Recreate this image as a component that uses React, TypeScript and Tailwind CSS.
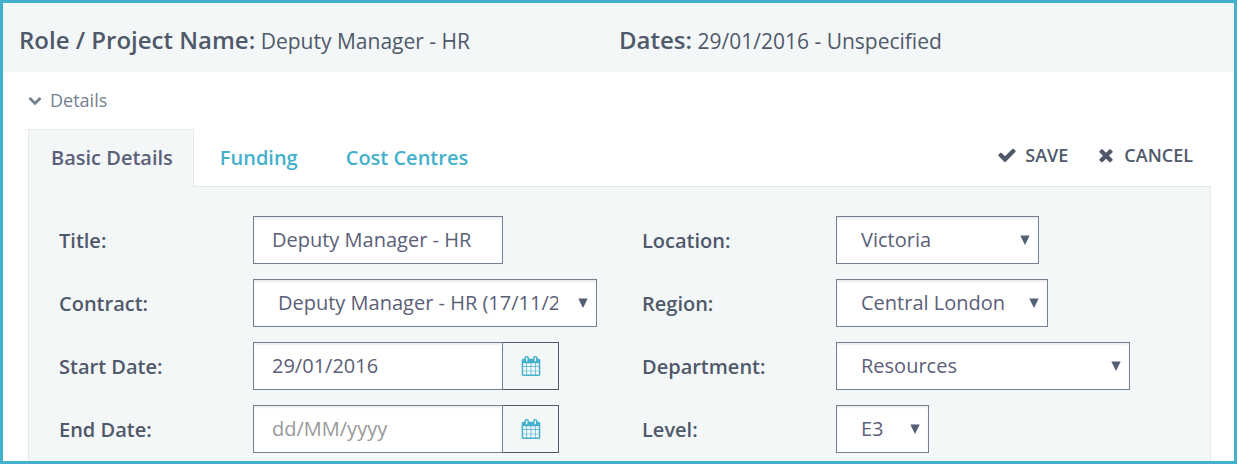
import type { ReactNode } from "react";

type IconProps = { d: string; className: string };

const CHECK =
  "M1671 566q0 40-28 68l-724 724-136 136q-28 28-68 28t-68-28l-136-136-362-362q-28-28-28-68t28-68l136-136q28-28 68-28t68 28l294 295 656-657q28-28 68-28t68 28l136 136q28 28 28 68z";
const CROSS =
  "M1490 1322q0 40-28 68l-136 136q-28 28-68 28t-68-28l-294-294-294 294q-28 28-68 28t-68-28l-136-136q-28-28-28-68t28-68l294-294-294-294q-28-28-28-68t28-68l136-136q28-28 68-28t68 28l294 294 294-294q28-28 68-28t68 28l136 136q28 28 28 68t-28 68l-294 294 294 294q28 28 28 68z";
const CHEVRON =
  "M1683 808l-742 741q-19 19-45 19t-45-19l-742-741q-19-19-19-45.5t19-45.5l166-165q19-19 45-19t45 19l531 531 531-531q19-19 45-19t45 19l166 165q19 19 19 45.5t-19 45.5z";
const CALENDAR =
  "M192 1664h288v-288h-288v288zm352 0h320v-288h-320v288zm-352-352h288v-320h-288v320zm352 0h320v-320h-320v320zm-352-384h288v-288h-288v288zm736 736h320v-288h-320v288zm-384-736h320v-288h-320v288zm768 736h288v-288h-288v288zm-384-352h320v-320h-320v320zm-352-864v-288q0-13-9.5-22.5t-22.5-9.5h-64q-13 0-22.5 9.5t-9.5 22.5v288q0 13 9.5 22.5t22.5 9.5h64q13 0 22.5-9.5t9.5-22.5zm736 864h288v-320h-288v320zm-384-384h320v-288h-320v288zm384 0h288v-288h-288v288zm32-480v-288q0-13-9.5-22.5t-22.5-9.5h-64q-13 0-22.5 9.5t-9.5 22.5v288q0 13 9.5 22.5t22.5 9.5h64q13 0 22.5-9.5t9.5-22.5zm384-64v1280q0 52-38 90t-90 38h-1408q-52 0-90-38t-38-90v-1280q0-52 38-90t90-38h128v-96q0-66 47-113t113-47h64q66 0 113 47t47 113v96h384v-96q0-66 47-113t113-47h64q66 0 113 47t47 113v96h128q52 0 90 38t38 90z";

function Icon({ d, className }: IconProps) {
  return (
    <svg viewBox="0 0 1792 1792" fill="currentColor" aria-hidden="true" className={className}>
      <path d={d} />
    </svg>
  );
}

const control =
  "h-12 border border-[#747f8f] bg-white text-xl text-[#5b6078] shadow-[inset_0_2px_2px_rgba(0,0,0,0.07)] outline-none placeholder:text-[#999999] placeholder:opacity-100";

function Field({ id, label, children }: { id: string; label: string; children: ReactNode }) {
  return (
    <div className="flex items-center">
      <label htmlFor={id} className="w-[194px] shrink-0 pt-0.5 text-xl font-semibold text-[#50596a]">
        {label}
      </label>
      {children}
    </div>
  );
}

function Select({ id, options, width }: { id: string; options: string[]; width: string }) {
  return (
    <div className={`relative ${width}`}>
      <select id={id} className={`${control} block w-full appearance-none pr-[38px] pl-6`}>
        {options.map((option) => (
          <option key={option}>{option}</option>
        ))}
      </select>
      <svg
        viewBox="0 0 10 10"
        aria-hidden="true"
        className="pointer-events-none absolute top-[19px] right-[9px] size-[10px] fill-[#525f75]"
      >
        <path d="M0.3 0.5H9.7L5 10z" />
      </svg>
    </div>
  );
}

function DateInput({ id, value }: { id: string; value?: string }) {
  return (
    <div className="flex">
      <input
        id={id}
        type="text"
        defaultValue={value}
        placeholder="dd/MM/yyyy"
        className={`${control} w-[250px] px-[18px] pb-0.5`}
      />
      <button
        type="button"
        aria-label="Open calendar"
        className="flex h-12 w-14 items-center justify-center border border-l-0 border-[#505a6b] text-[#43b0cc]"
      >
        <Icon d={CALENDAR} className="size-5" />
      </button>
    </div>
  );
}

export default function App() {
  return (
    <div className="flex min-h-screen flex-col border-3 border-[#43b0cc] bg-white font-['Open_Sans',sans-serif] text-[#50596a]">
      <header className="grid grid-cols-[600px_1fr] bg-[#f3f7f8] px-4 pt-[21px] pb-[15px] text-[21px] leading-8">
        <p>
          <strong className="text-2xl leading-8 font-semibold">Role / Project Name:</strong> Deputy Manager - HR
        </p>
        <p>
          <strong className="text-2xl leading-8 font-semibold">Dates:</strong> 29/01/2016 - Unspecified
        </p>
      </header>

      <main className="flex flex-1 flex-col pr-[23px] pl-[25px]">
        <button type="button" className="mt-[14px] flex items-center gap-2 self-start text-lg text-[#747f8f]">
          <Icon d={CHEVRON} className="size-[14px]" />
          Details
        </button>

        <div className="mt-[15px] flex items-end justify-between">
          <nav className="relative -mb-px flex h-[58px] text-xl font-semibold">
            <a
              href="#basic"
              className="flex items-center border border-b-0 border-[#e4eaec] bg-[#f3f7f8] pr-5 pb-px pl-[22px] text-[#5b6078]"
            >
              Basic Details
            </a>
            <a href="#funding" className="flex items-center pr-6 pl-[26px] text-[#43b0cc]">
              Funding
            </a>
            <a href="#cost-centres" className="flex items-center px-6 text-[#43b0cc]">
              Cost Centres
            </a>
          </nav>
          <div className="flex gap-7 pr-[18px] pb-[17px] text-lg font-semibold">
            <button type="button" className="flex items-center gap-2">
              <Icon d={CHECK} className="size-5" />
              SAVE
            </button>
            <button type="button" className="flex items-center gap-2">
              <Icon d={CROSS} className="size-5" />
              CANCEL
            </button>
          </div>
        </div>

        <form className="grid flex-1 grid-cols-[583px_1fr] content-start gap-y-[15px] border border-b-0 border-[#e4eaec] bg-[#f3f7f8] px-[30px] pt-[29px] pb-1">
          <Field id="title" label="Title:">
            <input
              id="title"
              type="text"
              defaultValue="Deputy Manager - HR"
              className={`${control} w-[250px] px-[18px] pb-0.5`}
            />
          </Field>
          <Field id="location" label="Location:">
            <Select id="location" options={["Victoria"]} width="w-[203px]" />
          </Field>
          <Field id="contract" label="Contract:">
            <Select id="contract" options={["Deputy Manager - HR (17/11/2015)"]} width="w-[344px]" />
          </Field>
          <Field id="region" label="Region:">
            <Select id="region" options={["Central London"]} width="w-[212px]" />
          </Field>
          <Field id="start-date" label="Start Date:">
            <DateInput id="start-date" value="29/01/2016" />
          </Field>
          <Field id="department" label="Department:">
            <Select id="department" options={["Resources"]} width="w-[294px]" />
          </Field>
          <Field id="end-date" label="End Date:">
            <DateInput id="end-date" />
          </Field>
          <Field id="level" label="Level:">
            <Select id="level" options={["E3"]} width="w-[93px]" />
          </Field>
        </form>
      </main>
    </div>
  );
}
